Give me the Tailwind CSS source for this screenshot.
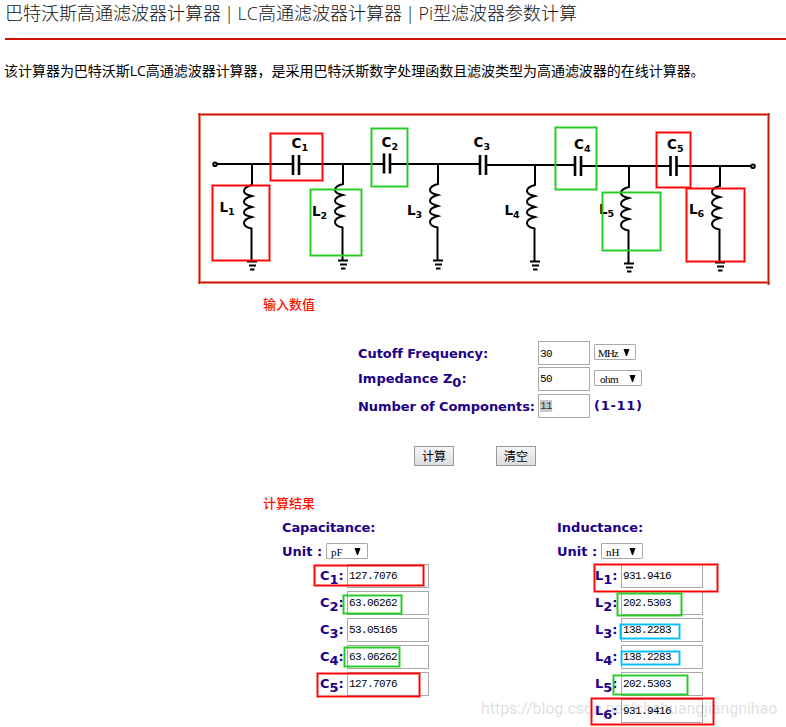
<!DOCTYPE html>
<html lang="zh-CN">
<head>
  <meta charset="UTF-8" />
  <meta name="viewport" content="width=device-width, initial-scale=1.0" />
  <title>巴特沃斯高通滤波器计算器</title>
  <script src="https://cdn.jsdelivr.net/npm/@tailwindcss/browser@4"></script>
</head>
<body class="relative w-[786px] h-[727px] overflow-hidden bg-white text-black font-['Open_Sans','Noto_Sans_CJK_SC',sans-serif]">
  <header class="ml-[5px] h-10 border-b-2 border-[#d01000]">
    <h1 class="text-[18px] leading-[27px] font-light text-[#111] whitespace-nowrap [word-spacing:-1.3px]">巴特沃斯高通滤波器计算器 | LC高通滤波器计算器 | Pi型滤波器参数计算</h1>
  </header>
  <p class="ml-1 mt-5 h-[52px] text-[14px] leading-[22px] tracking-[-0.03px] whitespace-nowrap">该计算器为巴特沃斯LC高通滤波器计算器，是采用巴特沃斯数字处理函数且滤波类型为高通滤波器的在线计算器。</p>

  <!-- Filter schematic -->
  <svg class="block ml-[198px] w-[572px] h-[174px]" viewBox="198 112 572 174" fill="none" stroke="#000" stroke-width="2">
    <defs>
      <g id="coil">
        <path d="M0 0V21C-4 22-8 24-8 27C-8 31-3 31 0 32C-4 33-8 35-8 38C-8 41-3 42 0 43C-4 44-8 45-8 48.500C-8 52-3 52 0 53C-4 54-8 56-8 59C-8 63-3 64 -0.500 64.500V97" />
        <path d="M-5 97.500H5M-3 101.500H4M-2 105.500H2.500" />
      </g>
      <path id="cap" stroke-width="2.600" d="M-3 -10V10M3 -10V10" />
    </defs>
    <g stroke="#f08070" stroke-width="3"><path d="M198 114.500H770M198 282.500H770M199.500 113V284M768.500 113V285" /></g>
    <g stroke="#b82010" stroke-width="1"><path d="M198 114.500H770M198 282.500H770M199.500 113V284M768.500 113V285" /></g>
    <circle cx="215" cy="164.200" r="1.800" />
    <circle cx="753" cy="166.200" r="1.800" />
    <path d="M217 164H293M299 164H384M390 164H480M486 165H575M581 166H670M677 166H751" />
    <use href="#cap" x="296" y="165" />
    <use href="#cap" x="387" y="163.500" />
    <use href="#cap" x="483" y="165" />
    <use href="#cap" x="578" y="166" />
    <use href="#cap" x="673.500" y="166" />
    <use href="#coil" x="252" y="164" />
    <use href="#coil" x="343" y="163" />
    <use href="#coil" x="438" y="163" />
    <use href="#coil" x="535" y="164" />
    <use href="#coil" x="629" y="166" />
    <use href="#coil" x="720" y="165" />
    <g fill="#000" stroke="none" class="text-[13.5px] font-bold font-['DejaVu_Sans',sans-serif]">
      <text x="291.500" y="148">C<tspan class="text-[9.5px]" dy="3">1</tspan></text>
      <text x="381.500" y="147">C<tspan class="text-[9.5px]" dy="3">2</tspan></text>
      <text x="473.500" y="147">C<tspan class="text-[9.5px]" dy="3">3</tspan></text>
      <text x="574" y="149">C<tspan class="text-[9.5px]" dy="3">4</tspan></text>
      <text x="667" y="149">C<tspan class="text-[9.5px]" dy="3">5</tspan></text>
      <text x="219.500" y="212">L<tspan class="text-[9.5px]" dy="3">1</tspan></text>
      <text x="312" y="216">L<tspan class="text-[9.5px]" dy="3">2</tspan></text>
      <text x="407" y="215">L<tspan class="text-[9.5px]" dy="3">3</tspan></text>
      <text x="504.500" y="215">L<tspan class="text-[9.5px]" dy="3">4</tspan></text>
      <text x="599" y="214">L<tspan class="text-[9.5px]" dy="3">5</tspan></text>
      <text x="689" y="214">L<tspan class="text-[9.5px]" dy="3">6</tspan></text>
    </g>
  </svg>

  <h2 class="ml-[263px] mt-2 h-[47px] text-[13px] leading-5 font-medium text-[#ff1000]">输入数值</h2>

  <form class="font-['DejaVu_Sans',sans-serif] text-[13px] font-bold text-[#1c0088]">
    <div class="ml-[358px] flex h-[26px]">
      <label class="w-[180px] leading-[26px] tracking-[-0.06px]">Cutoff Frequency:</label>
      <input class="w-[52px] h-6 border border-[#a9a9a9] px-px pt-px font-['Liberation_Mono',monospace] font-normal text-[11px] tracking-[-0.6px] text-black" value="30" />
      <div class="ml-1 mt-[3px] w-[42px] h-4 flex items-center justify-between pl-[3px] pr-[5px] border border-[#a9a9a9] rounded-[1px] font-['Liberation_Serif',serif] font-normal text-[11px] text-black"><span class="relative top-px tracking-[-1px]">MHz</span><svg class="w-[7px] h-[7px]" viewBox="0 0 7 7"><path d="M0.500 0H6.500L4 7H3Z" /></svg></div>
    </div>
    <div class="ml-[358px] flex h-[27px]">
      <label class="w-[180px] leading-6">Impedance Z<span class="relative top-1">0</span>:</label>
      <input class="w-[52px] h-6 border border-[#a9a9a9] px-px font-['Liberation_Mono',monospace] font-normal text-[11px] tracking-[-0.6px] text-black" value="50" />
      <div class="ml-1 mt-[3px] w-12 h-4 flex items-center justify-between pl-[5px] pr-[5px] border border-[#a9a9a9] rounded-[1px] font-['Liberation_Serif',serif] font-normal text-[11px] text-black"><span class="relative top-px tracking-[-0.5px]">ohm</span><svg class="w-[7px] h-[7px]" viewBox="0 0 7 7"><path d="M0.500 0H6.500L4 7H3Z" /></svg></div>
    </div>
    <div class="ml-[358px] flex h-[52px]">
      <label class="w-[180px] leading-[25px] tracking-[-0.08px] whitespace-nowrap">Number of Components:</label>
      <div class="w-[52px] h-6 flex items-center border border-[#a9a9a9] px-px font-['Liberation_Mono',monospace] font-normal text-[11px] tracking-[-0.6px] text-[#333]"><span class="bg-[#c8c8c8] h-3 leading-3">11</span></div>
      <span class="ml-1 leading-6 tracking-[0.7px]">(1-11)</span>
    </div>
    <div class="ml-[414px] flex gap-[42px] h-[47px]">
      <button type="button" class="w-10 h-5 border border-[#999] bg-linear-to-b from-[#f6f6f6] to-[#dddddd] text-[12px] leading-[18px] font-normal text-black font-['Noto_Sans_CJK_SC',sans-serif]">计算</button>
      <button type="button" class="w-10 h-5 border border-[#999] bg-linear-to-b from-[#f6f6f6] to-[#dddddd] text-[12px] leading-[18px] font-normal text-black font-['Noto_Sans_CJK_SC',sans-serif]">清空</button>
    </div>
  </form>

  <h2 class="ml-[263px] h-6 text-[13px] leading-5 font-medium text-[#ff1000]">计算结果</h2>

  <!-- Results -->
  <div class="ml-[282px] flex font-['DejaVu_Sans',sans-serif] text-[13px] font-bold text-[#1c0088]">
    <section class="w-[275px]">
      <h3 class="h-[26px] leading-[22px] tracking-[-0.1px]">Capacitance:</h3>
      <div class="flex h-[21px]">
        <span class="w-11 leading-[17px]">Unit :</span>
        <div class="w-[42px] h-4 flex items-center justify-between pl-1 pr-[6px] border border-[#a9a9a9] rounded-[1px] font-['Liberation_Serif',serif] font-normal text-[11px] text-black"><span class="relative top-px">pF</span><svg class="w-[7px] h-[7px]" viewBox="0 0 7 7"><path d="M0.500 0H6.500L4 7H3Z" /></svg></div>
      </div>
      <div id="capacitors"></div>
    </section>
    <section>
      <h3 class="h-[26px] leading-[22px]">Inductance:</h3>
      <div class="flex h-[21px]">
        <span class="w-11 leading-[17px]">Unit :</span>
        <div class="w-[42px] h-4 flex items-center justify-between pl-1 pr-[6px] border border-[#a9a9a9] rounded-[1px] font-['Liberation_Serif',serif] font-normal text-[11px] text-black"><span class="relative top-px">nH</span><svg class="w-[7px] h-[7px]" viewBox="0 0 7 7"><path d="M0.500 0H6.500L4 7H3Z" /></svg></div>
      </div>
      <div id="inductors"></div>
    </section>
  </div>

  <div class="absolute left-[481px] top-[698px] text-[16px] leading-[22px] tracking-[-0.05px] whitespace-nowrap text-black/15 font-['Roboto',sans-serif]">https://blog.csdn.net/chehuangjiangnihao</div>

  <!-- Colored marks over matching values -->
  <svg id="marks" class="absolute left-0 top-0 w-[786px] h-[727px] pointer-events-none" viewBox="0 0 786 727" fill="none"></svg>

  <script>
    const row = (name, i, value, pad) => `
      <div class="flex h-[27px]">
        <label class="${pad} leading-6">${name}<span class="relative top-1">${i + 1}</span>:</label>
        <input class="w-[82px] h-6 border border-[#a9a9a9] px-px font-['Liberation_Mono',monospace] font-normal text-[11px] tracking-[-0.6px] text-black" value="${value}" />
      </div>`;

    const caps = ['127.7076', '63.06262', '53.05165', '63.06262', '127.7076'];
    const inds = ['931.9416', '202.5303', '138.2283', '138.2283', '202.5303', '931.9416'];
    document.getElementById('capacitors').innerHTML = caps.map((v, i) => row('C', i, v, 'w-[65px] pl-[38px]')).join('');
    document.getElementById('inductors').innerHTML = inds.map((v, i) => row('L', i, v, 'w-[64px] pl-[38px]')).join('');

    // x, y, width, height, color
    const marks = [
      [270.5, 133.5, 52, 47, '#ff0000'], [212.5, 185.5, 57, 75, '#ff0000'],
      [656.5, 132.5, 34, 55, '#ff0000'], [686.5, 188.5, 58, 73, '#ff0000'],
      [371.5, 128.5, 36, 58, '#22cc22'], [310.5, 189.5, 51, 66, '#22cc22'],
      [555.5, 127.5, 41, 62, '#22cc22'], [602.5, 192.5, 58, 58, '#22cc22'],
      [314.5, 565.5, 109, 20, '#ff0000'], [343.5, 595.5, 58, 18, '#22cc22'],
      [344.5, 647.5, 55, 19, '#22cc22'], [317.5, 673.5, 102, 23, '#ff0000'],
      [594.5, 564.5, 123, 27, '#ff0000'], [617.5, 593.5, 64, 22, '#22cc22'],
      [620.5, 624.5, 59, 14, '#00bfff'], [621.5, 651.5, 58, 13, '#00bfff'],
      [613.5, 675.5, 74, 19, '#22cc22'], [591.5, 698.5, 122, 26, '#ff0000']
    ];
    document.getElementById('marks').innerHTML = marks.map(([x, y, w, h, c]) =>
      `<rect x="${x}" y="${y}" width="${w}" height="${h}" stroke="${c}" stroke-opacity=".5" stroke-width="2.6" />` +
      `<rect x="${x}" y="${y}" width="${w}" height="${h}" stroke="${c}" stroke-width="1.2" />`).join('');
  </script>
</body>
</html>
